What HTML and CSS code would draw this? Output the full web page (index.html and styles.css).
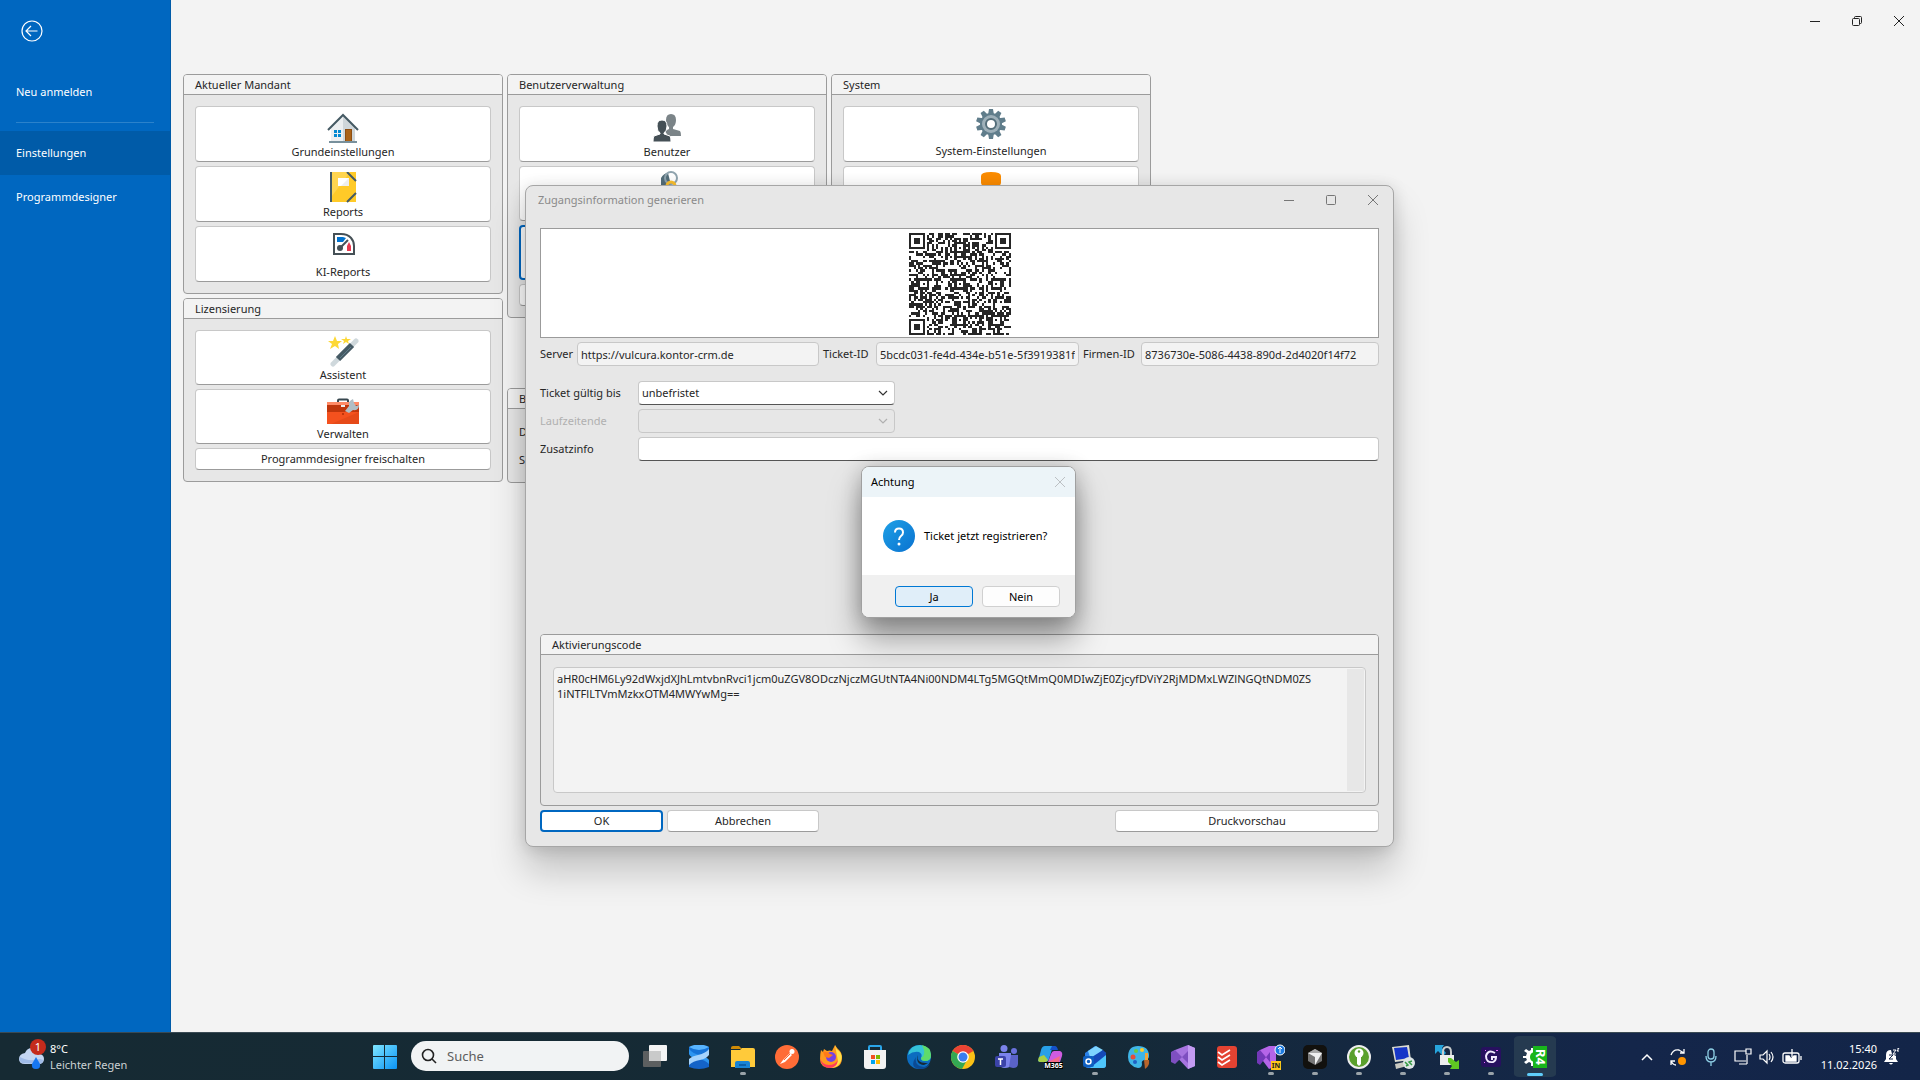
FILE: index.html
```
<!DOCTYPE html>
<html lang="de">
<head>
<meta charset="utf-8">
<title>Einstellungen</title>
<meta name="viewport" content="width=device-width, initial-scale=1">
<link rel="stylesheet" href="styles.css">
<script src="qr.js" defer></script>
</head>
<body>
<div class="app">
  <nav class="sidebar">
    <button class="back" type="button" aria-label="Zurück">
      <svg width="22" height="22" viewBox="0 0 22 22" fill="none" stroke="#fff" stroke-width="1.2"><circle cx="11" cy="11" r="10"/><path d="M16.500 11H5.500M10 6l-5 5 5 5"/></svg>
    </button>
    <a class="nav-item" href="#neu">Neu anmelden</a>
    <hr class="nav-line">
    <a class="nav-item active" href="#einstellungen">Einstellungen</a>
    <a class="nav-item" href="#designer">Programmdesigner</a>
  </nav>

  <main class="backstage">
    <div class="window-controls">
      <button type="button" aria-label="Minimieren"><svg width="12" height="12" viewBox="0 0 12 12" fill="none" stroke="#222"><path d="M1 6.500h10"/></svg></button>
      <button type="button" aria-label="Wiederherstellen"><svg width="12" height="12" viewBox="0 0 12 12" fill="none" stroke="#222"><rect x="1.500" y="3.500" width="7" height="7" rx="1"/><path d="M3.500 3.500v-1q0-1 1-1h5q1 0 1 1v5q0 1-1 1h-1"/></svg></button>
      <button type="button" aria-label="Schließen"><svg width="12" height="12" viewBox="0 0 12 12" fill="none" stroke="#222"><path d="M1 1l10 10M11 1L1 11"/></svg></button>
    </div>
    <div class="columns">
      <div class="column">
        <section class="group">
          <h2>Aktueller Mandant</h2>
          <div class="group-body">
            <button class="tile" type="button">
              <svg width="32" height="32" viewBox="0 0 32 32"><path d="M4 29V15L16 4l12 11v14z" fill="#eceff1"/><path d="M16 4l12 11v14H16z" fill="#cfd6da"/><path d="M1 18L16 3l15 15" fill="none" stroke="#455a64" stroke-width="2"/><path d="M7 18h3v3H7zM11 18h3v3h-3zM7 22h3v3H7zM11 22h3v3h-3z" fill="#0288d1"/><path d="M18 17h7v12h-7z" fill="#8d4e12"/><path d="M19 18h5v11h-5z" fill="#ab6216"/><path d="M2 29h28v2H2z" fill="#78909c"/></svg>
              <span>Grundeinstellungen</span>
            </button>
            <button class="tile" type="button">
              <svg width="32" height="32" viewBox="0 0 32 32"><rect x="3" y="0" width="26" height="30" rx="1" fill="#ffca28"/><path d="M5 0h18L5 24z" fill="#ffd54f"/><path d="M3 0h2v30H3z" fill="#455a64"/><path d="M20 0l9 9M20 30l9-9" stroke="#455a64" stroke-width="2"/><path d="M24 0h5v5zM24 30h5v-5z" fill="#ffca28"/><path d="M11 6h11v8H11z" fill="#fff"/><path d="M22 6v8H14z" fill="#eee"/></svg>
              <span>Reports</span>
            </button>
            <button class="tile" type="button">
              <svg width="32" height="32" viewBox="0 0 32 32"><path d="M7 2h7c9 0 13 6 13 12v8H7z" fill="#fff" stroke="#455056" stroke-width="2"/><path d="M10 5h6l3 1-3 4h-6z" fill="#0072ce"/><path d="M20 14l2-4 2 4v5h-4z" fill="#e8384f"/><circle cx="13" cy="16" r="3" fill="#455056"/><path d="M13 16l8-8" stroke="#455056" stroke-width="2"/></svg>
              <span>KI-Reports</span>
            </button>
          </div>
        </section>
        <section class="group">
          <h2>Lizensierung</h2>
          <div class="group-body">
            <button class="tile low" type="button">
              <svg width="32" height="32" viewBox="0 0 32 32"><path d="M6 29L29 6" stroke="#cfd8dc" stroke-width="5" stroke-linecap="round"/><path d="M11 24L25 10" stroke="#455a64" stroke-width="6"/><path d="M13 23L24 12" stroke="#607d8b" stroke-width="1"/><path d="M8 1l2 5h5l-4 3 1 5-4-3-5 3 2-5-4-3h5zM19 1l1 3h4l-3 2 1 3-3-2-3 2 1-3-3-2h4z" fill="#fdd835"/></svg>
              <span>Assistent</span>
            </button>
            <button class="tile low" type="button">
              <svg width="32" height="32" viewBox="0 -3 32 32"><path d="M11 6V3.500q0-1 1-1h8q1 0 1 1V6" fill="none" stroke="#37474f" stroke-width="2"/><path d="M0 5h32v22H0z" fill="#f4511e"/><path d="M0 5h32v3H0z" fill="#ff8a65"/><path d="M0 8h32v7H0z" fill="#bf360c"/><path d="M32 15v12H4z" fill="#e64a19"/><path d="M14 8h4v2h-4z" fill="#eceff1"/><path d="M15 16h2v2h-2z" fill="#bf360c"/><path d="M18 14l4-5q-1-5 4-7l1 4 2 3 3-1q0 6-6 5l-4 3z" fill="#b0bec5"/></svg>
              <span>Verwalten</span>
            </button>
            <button class="btn" type="button">Programmdesigner freischalten</button>
          </div>
        </section>
      </div>
      <div class="column">
        <section class="group">
          <h2>Benutzerverwaltung</h2>
          <div class="group-body">
            <button class="tile" type="button">
              <svg width="32" height="32" viewBox="0 0 32 32"><path d="M20 2q5 0 5 6 0 5-3 7v2l7 2q1 1 1 5H17l-3-5 4-2v-2q-3-2-3-7 0-6 5-6z" fill="#7b8488"/><path d="M11 8q5 0 5 6 0 5-3 7v1l6 2q1 1 1 6H2q0-5 1-6l6-2v-1q-3-2-3-7 0-6 5-6z" fill="#455056" stroke="#fff"/></svg>
              <span>Benutzer</span>
            </button>
            <button class="tile low" type="button" aria-label="Rechte">
              <svg width="32" height="32" viewBox="0 2 32 32"><path d="M10 9q3-5 7-5l3 12-4 8-6-6z" fill="#546e7a"/><circle cx="20" cy="9" r="6" fill="none" stroke="#90a4ae" stroke-width="2"/><circle cx="20" cy="17" r="4" fill="none" stroke="#fbc02d" stroke-width="3"/></svg>
              <span></span>
            </button>
            <button class="tile low focused" type="button" aria-label="Zugangsinformation"></button>
            <button class="btn" type="button" aria-label="Weitere"></button>
          </div>
        </section>
        <section class="group info">
          <h2>B</h2>
          <div class="group-body"><p>D</p><p>S</p></div>
        </section>
      </div>
      <div class="column">
        <section class="group">
          <h2>System</h2>
          <div class="group-body">
            <button class="tile gear" type="button">
              <svg width="32" height="32" viewBox="0 0 32 32"><g fill="#607d8b"><circle cx="16" cy="16" r="11"/><path d="M14 1h4l1 6h-6zM14 31h4l1-6h-6z"/><path d="M14 1h4l1 6h-6zM14 31h4l1-6h-6z" transform="rotate(36 16 16)"/><path d="M14 1h4l1 6h-6zM14 31h4l1-6h-6z" transform="rotate(72 16 16)"/><path d="M14 1h4l1 6h-6zM14 31h4l1-6h-6z" transform="rotate(108 16 16)"/><path d="M14 1h4l1 6h-6zM14 31h4l1-6h-6z" transform="rotate(144 16 16)"/></g><circle cx="16" cy="16" r="9" fill="#9eb0b9"/><circle cx="16" cy="16" r="5" fill="#fff" stroke="#546e7a" stroke-width="2"/></svg>
              <span>System-Einstellungen</span>
            </button>
            <button class="tile" type="button" aria-label="Datenbank">
              <svg width="32" height="32" viewBox="0 4 32 32"><path d="M6 8q0-4 10-4t10 4v7q0 4-10 4T6 15z" fill="#fb8c00"/><path d="M6 19q10 4 20 0v8q0 4-10 4T6 27z" fill="#fb8c00"/></svg>
              <span></span>
            </button>
          </div>
        </section>
      </div>
    </div>
  </main>

  <section class="dialog" role="dialog" aria-labelledby="dlg-title">
    <header class="dialog-title">
      <h1 id="dlg-title">Zugangsinformation generieren</h1>
      <div class="dialog-controls">
        <button type="button" aria-label="Minimieren"><svg width="12" height="12" viewBox="0 0 12 12" fill="none" stroke="#777"><path d="M1 6.500h10"/></svg></button>
        <button type="button" aria-label="Maximieren"><svg width="12" height="12" viewBox="0 0 12 12" fill="none" stroke="#777"><rect x="1.500" y="1.500" width="9" height="9" rx="1"/></svg></button>
        <button type="button" aria-label="Schließen"><svg width="12" height="12" viewBox="0 0 12 12" fill="none" stroke="#777"><path d="M1 1l10 10M11 1L1 11"/></svg></button>
      </div>
    </header>
    <form class="dialog-body" onsubmit="return false">
      <div class="qr-panel"><svg id="qr" class="qr" viewBox="0 0 45 45" role="img" aria-label="QR-Code"></svg></div>
      <div class="id-row">
        <label for="server">Server</label><input id="server" class="field readonly" readonly value="https://vulcura.kontor-crm.de">
        <label for="ticket">Ticket-ID</label><input id="ticket" class="field readonly" readonly value="5bcdc031-fe4d-434e-b51e-5f3919381f02">
        <label for="firma">Firmen-ID</label><input id="firma" class="field readonly" readonly value="8736730e-5086-4438-890d-2d4020f14f72">
      </div>
      <div class="form-grid">
        <label for="gueltig">Ticket gültig bis</label>
        <div class="combo"><select id="gueltig" class="field"><option>unbefristet</option></select><svg width="10" height="6" viewBox="0 0 10 6" fill="none" stroke="#333" stroke-width="1.200"><path d="M1 1l4 4 4-4"/></svg></div>
        <label for="laufzeit" class="off">Laufzeitende</label>
        <div class="combo"><select id="laufzeit" class="field" disabled><option></option></select><svg width="10" height="6" viewBox="0 0 10 6" fill="none" stroke="#b0b0b0" stroke-width="1.200"><path d="M1 1l4 4 4-4"/></svg></div>
        <label for="zusatz">Zusatzinfo</label>
        <input id="zusatz" class="field" type="text">
      </div>
      <section class="group code">
        <h2><label for="code">Aktivierungscode</label></h2>
        <div class="group-body">
          <div class="code-box">
            <textarea id="code" readonly>aHR0cHM6Ly92dWxjdXJhLmtvbnRvci1jcm0uZGV8ODczNjczMGUtNTA4Ni00NDM4LTg5MGQtMmQ0MDIwZjE0ZjcyfDViY2RjMDMxLWZlNGQtNDM0ZS
1iNTFlLTVmMzkxOTM4MWYwMg==</textarea>
            <div class="track"></div>
          </div>
        </div>
      </section>
      <footer class="actions">
        <button class="btn ok" type="submit">OK</button>
        <button class="btn cancel" type="button">Abbrechen</button>
        <button class="btn preview" type="button">Druckvorschau</button>
      </footer>
    </form>
  </section>

  <section class="confirm" role="alertdialog" aria-labelledby="cf-title">
    <header><h1 id="cf-title">Achtung</h1>
      <button type="button" aria-label="Schließen"><svg width="12" height="12" viewBox="0 0 12 12" fill="none" stroke="#bcc0c3"><path d="M1 1l10 10M11 1L1 11"/></svg></button>
    </header>
    <div class="message">
      <svg width="32" height="32" viewBox="0 0 32 32"><defs><linearGradient id="q" x1="0" y1="0" x2="1" y2="1"><stop offset="0" stop-color="#1ea0e6"/><stop offset="1" stop-color="#0a72d0"/></linearGradient></defs><circle cx="16" cy="16" r="16" fill="url(#q)"/><path d="M12 12.500q0-4 4-4t4 4q0 2-2 3.500t-2 4" fill="none" stroke="#fff" stroke-width="2"/><circle cx="16" cy="24" r="1.500" fill="#fff"/></svg>
      <p>Ticket jetzt registrieren?</p>
    </div>
    <footer><button class="choice primary" type="button">Ja</button><button class="choice" type="button">Nein</button></footer>
  </section>
</div>

<footer class="taskbar">
  <a class="weather" href="#wetter">
    <svg width="28" height="32" viewBox="0 0 28 32"><path d="M7 25q-6 0-6-5t6-6q2-5 7-5 6 0 8 6 4 1 4 5t-4 5z" fill="#c4d6f3"/><path d="M4 24q-4-3-2-6 8 5 20 2l3 1q0 4-4 4z" fill="#9fbbe8"/><path d="M18 18l4 7q1 5-4 5t-4-5z" fill="#1677f2"/><circle cx="20" cy="8" r="8" fill="#c42b1c"/><text x="20" y="12" font-size="11" text-anchor="middle" fill="#fff">1</text></svg>
    <span class="weather-text"><b>8°C</b><span>Leichter Regen</span></span>
  </a>
  <div class="apps">
    <button class="app-btn" type="button" aria-label="Start"><svg width="24" height="24" viewBox="0 0 24 24"><defs><linearGradient id="w" x1="0" y1="0" x2="1" y2="1"><stop offset="0" stop-color="#7fe6ff"/><stop offset="1" stop-color="#0a93f5"/></linearGradient></defs><path d="M1 0h10v11H0V1q0-1 1-1zM12 0h11q1 0 1 1v10H12zM0 12h11v12H1q-1 0-1-1zM12 12h12v11q0 1-1 1H12z" fill="url(#w)"/></svg></button>
    <label class="search"><svg width="16" height="16" viewBox="0 0 16 16" fill="none" stroke="#222" stroke-width="1.600"><circle cx="7" cy="7" r="5.500"/><path d="M11 11l4 4"/></svg><input type="search" placeholder="Suche" aria-label="Suche"></label>
    <button class="app-btn" type="button" aria-label="Taskansicht"><svg width="24" height="24" viewBox="0 0 24 24"><rect x="0" y="6" width="18" height="16" rx="1" fill="#5c5f60"/><rect x="6" y="0" width="18" height="16" rx="1" fill="#f4f4f4"/><path d="M6 6h12v10H6z" fill="#c9caca"/></svg></button>
    <button class="app-btn" type="button" aria-label="Datenbankstudio"><svg width="24" height="24" viewBox="0 0 24 24"><path d="M2 2q10-4 20 0v7q-10 6-20 0z" fill="#1673d8"/><path d="M2 2q10 6 20 0-10-5-20 0z" fill="#58b4ff"/><path d="M2 15q10-6 20 0v7q-10 4-20 0z" fill="#1463c8"/><path d="M2 4q4 5 11 6 6 1 9 5v4q-4-4-10-5Q3 13 2 9z" fill="#2e95f0"/><path d="M22 4v6q-3 4-9 5-7 1-11 5v-6q3-3 9-4 8-2 11-6z" fill="#a5d3fd"/></svg></button>
    <button class="app-btn running" type="button" aria-label="Explorer"><svg width="24" height="24" viewBox="0 0 24 24"><path d="M0 3q0-2 2-2h6l3 3H0z" fill="#d08a06"/><path d="M0 5h9l2-2h11q2 0 2 2v17H0z" fill="#ffca3a"/><path d="M4 23v-5q0-2 2-2h11q2 0 2 2v5z" fill="#1983d3"/><path d="M8 19h7v2H8z" fill="#0c5fa8"/></svg></button>
    <button class="app-btn" type="button" aria-label="Postman"><svg width="24" height="24" viewBox="0 0 24 24"><circle cx="12" cy="12" r="12" fill="#ff6c37"/><path d="M5 19l3-4 7-7 2 2-7 7z" fill="#fff"/><circle cx="17" cy="6.500" r="2.500" fill="#fff"/><path d="M9 15l6-6" stroke="#ff6c37"/></svg></button>
    <button class="app-btn" type="button" aria-label="Firefox"><svg width="24" height="24" viewBox="0 0 24 24"><path d="M2 5l2 2 1-3 3 2q3-1 5 0l3-6q2 3 3 4 4 3 4 9 0 10-11 10T1 14q0-5 1-9z" fill="#ff9a1f"/><path d="M16 0q1 4 4 6 4 4 2 10-3 7-10 7 9-4 6-12z" fill="#ffe14a"/><path d="M1 13q2 7 9 7 6 0 9-5-1 8-9 8-8-1-9-10z" fill="#ff3b5c"/><circle cx="12" cy="12" r="5" fill="#7542e5"/><path d="M4 7q4-1 7 2l3 1-4 3-4-1z" fill="#ff7a18"/></svg></button>
    <button class="app-btn" type="button" aria-label="Store"><svg width="24" height="24" viewBox="0 0 24 24"><path d="M6 6V2q0-1 1-1h10q1 0 1 1v4" fill="none" stroke="#2aa5e8" stroke-width="2"/><path d="M1 5h22v16q0 3-3 3H4q-3 0-3-3z" fill="#f3f3f3"/><path d="M8 10h4v4H8z" fill="#f25022"/><path d="M13 10h4v4h-4z" fill="#7fba00"/><path d="M8 15h4v4H8z" fill="#00a4ef"/><path d="M13 15h4v4h-4z" fill="#ffb900"/></svg></button>
    <button class="app-btn" type="button" aria-label="Edge"><svg width="24" height="24" viewBox="0 0 24 24"><circle cx="12" cy="12" r="12" fill="#0c6cc0"/><path d="M1 10Q3 0 13 0q10 1 11 10 0 6-6 6-4 0-4-3 2-4-2-6-6-1-11 3z" fill="#35c2d8"/><path d="M15 0q9 2 9 10 0 6-6 6-4 0-4-3 6-3 1-13z" fill="#5edb6a"/><path d="M9 12q-2 9 8 10 3 0 6-3-4 6-11 5Q2 22 9 12z" fill="#0b4a94"/><path d="M11 10q-2 9 10 8l-4 2q-9-1-6-10z" fill="#172a34"/></svg></button>
    <button class="app-btn" type="button" aria-label="Chrome"><svg width="24" height="24" viewBox="0 0 24 24"><circle cx="12" cy="12" r="12" fill="#fbc116"/><path d="M12 12L1.600 6A12 12 0 0 1 22.400 6z" fill="#ea4335"/><path d="M12 12L1.600 6A12 12 0 0 0 11 24l5-9z" fill="#34a853"/><circle cx="12" cy="12" r="5.800" fill="#fff"/><circle cx="12" cy="12" r="4.500" fill="#3b7ded"/></svg></button>
    <button class="app-btn" type="button" aria-label="Teams"><svg width="24" height="24" viewBox="0 0 24 24"><circle cx="9" cy="3.500" r="3.500" fill="#7b83eb"/><circle cx="19" cy="6" r="3" fill="#6a72dd"/><path d="M4 8h12v12q-1 3-6 3t-6-4z" fill="#7b83eb"/><path d="M16 10h7v9q0 4-5 4l-4-1z" fill="#5a62c8"/><rect y="11" width="11" height="11" rx="2" fill="#3b43a8"/><path d="M3 14h5M5.500 14v6" stroke="#fff" stroke-width="1.500"/></svg></button>
    <button class="app-btn" type="button" aria-label="Microsoft 365"><svg width="26" height="24" viewBox="0 0 26 24"><path d="M7 1h8l-4 13q-1 3-4 3H2q-3 0-1-4l2-8q1-4 4-4z" fill="#28a0e8"/><path d="M1 12l5-2 4 5q-1 2-3 2H2q-3 0-1-5z" fill="#a8cf45"/><path d="M14 1h3q2 0 3 4H12z" fill="#1450c8"/><path d="M16 6h6q3 1 2 5l-2 6H10l3-8q1-3 3-3z" fill="#cf5ce0"/><path d="M22 11l-1 6H10z" fill="#f56a88"/><path d="M6 17h19v7H6z" fill="#000"/><text x="15.500" y="23" font-size="7" font-weight="700" text-anchor="middle" fill="#fff">M365</text></svg></button>
    <button class="app-btn running" type="button" aria-label="Outlook"><svg width="24" height="24" viewBox="0 0 24 24"><path d="M2 8L12 1l11 7v12q0 3-3 3H5q-3 0-3-3z" fill="#2a80e8"/><path d="M5 6l8-5 7 4L8 15z" fill="#7ed4ff"/><path d="M9 12l11-7 3 3v4L8 22z" fill="#1549b8"/><path d="M23 10v10q0 3-3 3H7z" fill="#4ec5fb"/><rect y="11" width="11" height="11" rx="2" fill="#0f5fc0"/><circle cx="5.500" cy="16.500" r="2.500" fill="none" stroke="#fff" stroke-width="1.500"/></svg></button>
    <button class="app-btn" type="button" aria-label="Paint"><svg width="24" height="24" viewBox="0 0 24 24"><path d="M11 1q11 0 11 10 0 4-5 4-3 1-2 4 0 4-4 4Q1 21 1 12 1 1 11 1z" fill="#3fb5e6"/><circle cx="6" cy="12" r="2.500" fill="#e74c3c"/><circle cx="9" cy="6" r="2" fill="#6ccb3f"/><circle cx="15" cy="5" r="2" fill="#ffc928"/><circle cx="8" cy="17" r="2" fill="#2160c4"/><path d="M18 8h3v8h-3z" fill="#f2a63a"/><path d="M17 15h5q1 6-4 9z" fill="#b8642b"/></svg></button>
    <button class="app-btn" type="button" aria-label="Visual Studio"><svg width="24" height="24" viewBox="0 0 24 24"><path d="M17 0l7 3v18l-7 3L1 7l3-2z" fill="#a774e0"/><path d="M0 7l4-2 13 13V6L4 19l-4-2z" fill="#7e4fc0"/><path d="M17 0l7 3v18l-7 3z" fill="#c39bf2"/></svg></button>
    <button class="app-btn" type="button" aria-label="Todoist"><svg width="24" height="24" viewBox="0 0 24 24"><rect x="2" y="1" width="20" height="22" rx="3" fill="#e44332"/><path d="M3 7l4 3 8-5M3 12l4 3 8-5M3 17l4 3 8-5" fill="none" stroke="#fff" stroke-width="1.600"/></svg></button>
    <button class="app-btn running" type="button" aria-label="Visual Studio Insiders"><svg width="28" height="26" viewBox="0 0 28 26"><path d="M12 2h7v20l-7 3L0 9l3-3z" fill="#b565e8"/><path d="M0 8l3-2 10 12V8L3 21l-3-2z" fill="#7338b8"/><circle cx="23" cy="6" r="5" fill="#1c7be0" stroke="#fff"/><path d="M23 9V3M21 5l2-2 2 2" stroke="#fff" fill="none"/><path d="M14 17h10v9H14z" fill="#ffc61a"/><text x="19" y="24" font-size="7" font-weight="700" text-anchor="middle" fill="#222">IN</text></svg></button>
    <button class="app-btn running" type="button" aria-label="Cursor"><svg width="24" height="24" viewBox="0 0 24 24"><rect width="24" height="24" rx="5" fill="#12110e"/><path d="M12 4l7 4v8l-7 4-7-4V8z" fill="#777"/><path d="M5 8h14l-7 12v-8z" fill="#f0f0f0"/><path d="M12 4l7 4H5z" fill="#aaa"/></svg></button>
    <button class="app-btn running" type="button" aria-label="KeePass"><svg width="24" height="24" viewBox="0 0 24 24"><circle cx="12" cy="12" r="11" fill="#5aa02c" stroke="#eee" stroke-width="2"/><circle cx="12" cy="8" r="4.500" fill="#fff"/><circle cx="12" cy="6.500" r="1.200" fill="#5aa02c"/><path d="M10 11h4v8l-2 2-2-2z" fill="#fff"/></svg></button>
    <button class="app-btn running" type="button" aria-label="Remotedesktop"><svg width="24" height="24" viewBox="0 0 24 24"><path d="M1 2l17-2 2 15-16 2z" fill="#dcdcd2"/><path d="M3 3l13-1 2 11-13 2z" fill="#1636c8"/><path d="M4 19l9-2 3 4-11 3z" fill="#c9c9c0"/><circle cx="18" cy="18" r="6" fill="#dfe6e6"/><path d="M14 17l3 3-2 1M21 16l-3 1 3 3" stroke="#369b45" stroke-width="1.500" fill="none"/></svg></button>
    <button class="app-btn running" type="button" aria-label="WinSCP"><svg width="24" height="24" viewBox="0 0 24 24"><path d="M0 0h9L7 3l4 5-3 3-5-5-3 3z" fill="#27a4dc"/><path d="M8 10V7q0-5 4-5t4 5v3" fill="none" stroke="#c8cccc" stroke-width="2"/><path d="M5 10h14v10H5z" fill="#eceeee"/><path d="M13 13h3l5 4 3-2v9h-9l2-3-4-4z" fill="#60c722"/></svg></button>
    <button class="app-btn running" type="button" aria-label="GitKraken"><svg width="24" height="24" viewBox="0 0 24 24"><rect x="2" y="2" width="20" height="20" rx="3" fill="#27105f"/><path d="M16 8q-7-4-9 3 0 7 7 6 3-1 3-5h-4v3" fill="none" stroke="#f2eaff" stroke-width="2"/><path d="M6 5h1v1H6zM17 5h2v1h-2zM5 17h1v1H5z" fill="#e36bff"/></svg></button>
    <button class="app-btn current" type="button" aria-label="Kontor R4"><svg class="spill" width="24" height="24" viewBox="0 0 24 24"><path d="M10 1h14v22H10z" fill="#18b51b"/><path d="M0 11h3l1-3-3-2 2-2 3 2 2-1V3h2v18H8v-3l-2-1-3 2-2-2 3-2-1-2H0z" fill="#fff"/><path d="M11 7v10q-4-1-4-5t4-5z" fill="#18b51b"/><text x="12" y="-13" font-size="13" font-weight="700" text-anchor="middle" fill="#fff" transform="rotate(90)">R4</text></svg></button>
  </div>
  <div class="tray">
    <svg width="12" height="12" viewBox="0 0 12 12" fill="none" stroke="#fff" stroke-width="1.500"><path d="M1 9l5-5 5 5"/></svg>
    <svg width="20" height="20" viewBox="0 0 20 20" fill="none" stroke="#fff" stroke-width="1.300"><path d="M3 8q2-6 8-5l5 3M16 2v4h-4M3 18v-4h4M3 14q2 4 5 4"/><circle cx="14" cy="14" r="4" fill="#ff9500" stroke="none"/></svg>
    <svg width="16" height="20" viewBox="0 0 16 20" fill="none" stroke="#8fd0e6" stroke-width="1.300"><rect x="5" y="2" width="6" height="10" rx="3"/><path d="M3 9q0 6 5 6t5-6M8 15v4"/></svg>
    <span class="status">
      <svg width="18" height="18" viewBox="0 0 18 18" fill="none" stroke="#fff" stroke-width="1.200"><path d="M12 3H1v10h11M5 16h8M13 7v9M12 1h5v5h-5z"/></svg>
      <svg width="16" height="16" viewBox="0 0 16 16" fill="none" stroke="#fff" stroke-width="1.200"><path d="M1 6h3l4-4v12l-4-4H1zM10 5q2 3 0 6M12 3q4 5 0 10"/></svg>
      <svg width="20" height="16" viewBox="0 0 20 16" fill="none" stroke="#fff" stroke-width="1.300"><rect x="1" y="4" width="16" height="10" rx="2"/><path d="M19 7v4"/><path d="M4 7h3l2 3 3-3h2v5H4z" fill="#fff"/><path d="M10 0v8"/></svg>
    </span>
    <time class="clock"><span>15:40</span><span>11.02.2026</span></time>
    <svg width="16" height="18" viewBox="0 0 16 18"><path d="M7 2q-5 0-5 5v4l-2 3h14l-2-3V8L8 6zM5 15h4q-2 3-4 0z" fill="#fff"/><path d="M5 7h4l-4 4h4" fill="none" stroke="#14264a"/><path d="M9 2h3L9 6h3M13 0h2l-2 3h2" fill="none" stroke="#fff"/></svg>
  </div>
</footer>
</body>
</html>
```
FILE: styles.css
```
* { box-sizing: border-box; }
body {
  margin: 0;
  min-height: 100vh;
  display: grid;
  grid-template-rows: 1fr 48px;
  font: 11px/16px "Noto Sans", "Open Sans", sans-serif;
  color: #262626;
  background: #f3f3f3;
}
button, input, select, textarea { font: inherit; color: inherit; margin: 0; }
button { padding: 0; border: 0; background: none; }
h1, h2, p { margin: 0; font-size: 11px; font-weight: 400; line-height: 16px; }
svg { display: block; flex: none; }

.app { position: relative; display: grid; grid-template-columns: 171px 1fr; }

/* Sidebar */
.sidebar { background: #0067c0; border-right: 1px solid #005ba8; color: #fff; }
.back { display: block; margin: 20px 0 28px 21px; }
.nav-item { display: flex; align-items: center; height: 44px; padding-left: 16px; color: #fff; text-decoration: none; }
.nav-item.active { background: #005ba8; }
.nav-line { margin: 8px 16px; border: 0; border-top: 1px solid #2b82cb; }

/* Settings page */
.backstage { padding: 0 12px; }
.window-controls { display: flex; justify-content: flex-end; height: 42px; gap: 30px; padding-right: 3px; align-items: center; margin-bottom: 32px; }
.columns { display: grid; grid-template-columns: repeat(3, minmax(0, 320px)); gap: 4px; }
.column { display: flex; flex-direction: column; gap: 4px; }
.group { border: 1px solid #9b9b9b; border-radius: 4px; background: #e7e7e7; overflow: hidden; }
.group h2 { height: 20px; padding: 2px 11px; border-bottom: 1px solid #9b9b9b; background: #f3f3f3; }
.group-body { display: flex; flex-direction: column; gap: 4px; padding: 11px; }
.tile, .btn { border: 1px solid #c8c8c8; border-bottom-color: #9b9b9b; border-radius: 4px; background: #fff; }
.tile { display: flex; flex-direction: column; align-items: center; height: 56px; padding: 5px 0; }
.tile.low { height: 55px; padding: 4px 0; }
.tile.gear { padding: 1px 0; gap: 3px; }
.btn { height: 22px; line-height: 18px; }
.focused, .btn.ok { border: 2px solid #0067c0; }
.info { margin-top: 66px; min-height: 95px; }
.info .group-body { padding-top: 15px; gap: 12px; }

/* Ticket window */
.dialog {
  position: absolute; left: 525px; top: 185px;
  display: flex; flex-direction: column;
  width: 869px; min-height: 662px;
  border: 1px solid #a6a6a6; border-radius: 8px; background: #e7e7e7;
  box-shadow: 0 24px 36px rgba(0, 0, 0, .2), 0 2px 16px rgba(0, 0, 0, .14);
}
.dialog-title { display: flex; justify-content: space-between; align-items: center; height: 28px; padding: 0 14px 0 12px; color: #8a8a8a; }
.dialog-controls { display: flex; gap: 30px; }
.dialog-body { flex: 1; display: flex; flex-direction: column; padding: 14px; }
.qr-panel { height: 110px; padding-top: 4px; border: 1px solid #9b9b9b; background: #fff; }
.qr { width: 102px; height: 102px; margin: 0 auto; }
.id-row { display: grid; grid-template-columns: 33px 242px 49px 203px 54px 1fr; column-gap: 4px; align-items: center; margin: 4px 0 15px; white-space: nowrap; }
.field { width: 100%; height: 24px; padding: 0 3px; border: 1px solid #c8c8c8; border-bottom-color: #555; border-radius: 4px; background: #fff; outline: 0; }
.field.readonly { background: #f3f3f3; border-color: #c8c8c8; }
.form-grid { display: grid; grid-template-columns: 98px 1fr; row-gap: 4px; align-items: center; }
.combo { display: grid; grid-template-columns: 257px; align-items: center; }
.combo > * { grid-area: 1 / 1; }
.combo svg { justify-self: end; margin-right: 7px; pointer-events: none; }
.combo select { appearance: none; opacity: 1; }
.combo select:disabled { background: #e7e7e7; border-color: #c8c8c8; }
.off { color: #b0b0b0; }
.code { margin: auto 0 4px; }
.code .group-body { padding: 12px; }
.code-box { display: flex; height: 126px; padding: 1px; border: 1px solid #c8c8c8; border-radius: 4px; background: #f3f3f3; }
.code-box textarea { flex: 1; min-width: 0; padding: 2px; border: 0; background: none; resize: none; overflow: hidden; white-space: pre; line-height: 15px; outline: 0; }
.track { width: 17px; background: #e7e7e7; }
.actions { display: flex; gap: 4px; }
.ok { width: 123px; }
.cancel { width: 152px; }
.preview { width: 264px; margin-left: auto; }

/* Confirmation */
.confirm {
  position: absolute; left: 861px; top: 466px;
  width: 215px; border: 1px solid #a0a0a0; border-radius: 8px; overflow: hidden;
  background: #fff; color: #000;
  box-shadow: 0 22px 32px rgba(0, 0, 0, .34), 0 2px 20px rgba(0, 0, 0, .22);
}
.confirm header { display: flex; justify-content: space-between; align-items: center; height: 30px; padding: 0 9px; background: #ecf4f8; }
.message { display: flex; align-items: center; gap: 9px; height: 78px; padding-left: 21px; white-space: nowrap; }
.confirm footer { display: flex; justify-content: flex-end; gap: 9px; padding: 11px 15px 10px; background: #f0f0f0; }
.choice { width: 78px; height: 21px; border: 1px solid #d0d0d0; border-radius: 4px; background: #fdfdfd; }
.choice.primary { border-color: #0078d4; background: #e0eef9; }

/* Taskbar */
.taskbar { display: grid; grid-template-columns: 1fr auto 1fr; align-items: stretch; border-top: 1px solid #3a4a54; background: linear-gradient(90deg, #162a33 0%, #152a36 55%, #14264a 85%, #132548 100%); color: #fff; }
.weather { display: flex; align-items: center; gap: 4px; padding-left: 18px; color: #fff; text-decoration: none; }
.weather svg { margin-bottom: 3px; }
.weather-text { display: flex; flex-direction: column; }
.weather-text b { font-weight: 400; }
.weather-text span { color: #ccd2d5; }
.apps { display: flex; align-items: stretch; }
.app-btn { display: grid; place-items: center; width: 44px; height: 47px; position: relative; }
.app-btn.running::after, .app-btn.current::after { content: ""; position: absolute; left: 19px; bottom: 5px; width: 6px; height: 3px; border-radius: 2px; background: #9aa3a9; }
.app-btn.current { border: 3px solid transparent; border-width: 3px 1px; border-radius: 6px; background: #253a50 padding-box; }
.app-btn.current::after { left: 13px; bottom: 1px; width: 16px; background: #5fcdfb; }
.spill { overflow: visible; }
.search { display: flex; align-items: center; gap: 10px; width: 218px; height: 30px; margin: 8px 4px; padding: 0 10px; border-radius: 15px; background: #f1f3f4; }
.search input { flex: 1; min-width: 0; padding: 0; border: 0; outline: 0; background: none; font-size: 13px; }
.search input::placeholder { color: #5d5d5d; opacity: 1; }
.tray { display: flex; justify-content: flex-end; align-items: center; gap: 15px; padding-right: 20px; }
.status { display: flex; align-items: center; gap: 7px; }
.clock { display: flex; flex-direction: column; align-items: flex-end; width: 60px; margin-right: -8px; white-space: nowrap; }
```
FILE: qr.js
```
// Draws the activation code as a version 7-L QR symbol (45 x 45 modules).
(function () {
  var N = 45, DATA = 156, BLOCK = 78, ECC = 20;
  var text = document.getElementById("code").value.replace(/\s/g, "");

  // Galois field tables
  var exp = [], log = [], v = 1, i, j;
  for (i = 0; i < 255; i++) { exp[i] = v; log[v] = i; v <<= 1; if (v > 255) v ^= 0x11d; }
  function mul(a, b) { return a && b ? exp[(log[a] + log[b]) % 255] : 0; }

  var gen = [1];
  for (i = 0; i < ECC; i++) {
    var next = gen.concat([0]);
    for (j = 0; j < gen.length; j++) next[j + 1] ^= mul(gen[j], exp[i]);
    gen = next;
  }
  function remainder(block) {
    var r = block.concat(new Array(ECC).fill(0));
    for (var a = 0; a < block.length; a++) {
      var f = r[a];
      for (var b = 0; b < gen.length; b++) r[a + b] ^= mul(gen[b], f);
    }
    return r.slice(block.length);
  }

  var bits = [];
  function put(value, n) { while (n--) bits.push((value >> n) & 1); }
  put(4, 4);
  put(text.length, 8);
  for (i = 0; i < text.length; i++) put(text.charCodeAt(i), 8);
  put(0, 4);
  while (bits.length % 8) bits.push(0);
  var data = [];
  for (i = 0; i < bits.length; i += 8) data.push(parseInt(bits.slice(i, i + 8).join(""), 2));
  for (i = 0; data.length < DATA; i++) data.push(i % 2 ? 0x11 : 0xec);
  var b1 = data.slice(0, BLOCK), b2 = data.slice(BLOCK), e1 = remainder(b1), e2 = remainder(b2), words = [];
  for (i = 0; i < BLOCK; i++) words.push(b1[i], b2[i]);
  for (i = 0; i < ECC; i++) words.push(e1[i], e2[i]);

  var masks = [
    function (r, c) { return (r + c) % 2 === 0; },
    function (r) { return r % 2 === 0; },
    function (r, c) { return c % 3 === 0; },
    function (r, c) { return (r + c) % 3 === 0; },
    function (r, c) { return ((r >> 1) + Math.floor(c / 3)) % 2 === 0; },
    function (r, c) { return (r * c) % 2 + (r * c) % 3 === 0; },
    function (r, c) { return ((r * c) % 2 + (r * c) % 3) % 2 === 0; },
    function (r, c) { return ((r + c) % 2 + (r * c) % 3) % 2 === 0; }
  ];

  function build(mask) {
    var m = [], used = [], r, c, k;
    for (r = 0; r < N; r++) { m.push(new Array(N).fill(0)); used.push(new Array(N).fill(false)); }
    function set(y, x, on) { if (y >= 0 && x >= 0 && y < N && x < N) { m[y][x] = on ? 1 : 0; used[y][x] = true; } }
    for (k = 0; k < N; k++) { set(6, k, k % 2 === 0); set(k, 6, k % 2 === 0); }
    [[3, 3], [3, N - 4], [N - 4, 3]].forEach(function (p) {
      for (var y = -4; y < 5; y++) for (var x = -4; x < 5; x++) {
        var d = Math.max(Math.abs(x), Math.abs(y));
        set(p[0] + y, p[1] + x, d !== 2 && d !== 4);
      }
    });
    [[6, 22], [22, 6], [22, 22], [22, 38], [38, 22], [38, 38]].forEach(function (p) {
      for (var y = -2; y < 3; y++) for (var x = -2; x < 3; x++) set(p[0] + y, p[1] + x, Math.max(Math.abs(x), Math.abs(y)) !== 1);
    });
    var f = 8 | mask, rem = f;
    for (k = 0; k < 10; k++) rem = (rem << 1) ^ ((rem >> 9) * 0x537);
    f = ((f << 10) | rem) ^ 0x5412;
    function fb(n) { return (f >> n) & 1; }
    for (k = 0; k < 6; k++) set(k, 8, fb(k));
    set(7, 8, fb(6)); set(8, 8, fb(7)); set(8, 7, fb(8));
    for (k = 9; k < 15; k++) set(8, 14 - k, fb(k));
    for (k = 0; k < 8; k++) set(8, N - 1 - k, fb(k));
    for (k = 8; k < 15; k++) set(N - 15 + k, 8, fb(k));
    set(N - 8, 8, 1);
    for (k = 0; k < 18; k++) {
      var on = (0x07c94 >> k) & 1, a = N - 11 + k % 3, b = Math.floor(k / 3);
      set(a, b, on); set(b, a, on);
    }
    var n = 0;
    for (var right = N - 1; right > 0; right -= 2) {
      if (right === 6) right = 5;
      for (var s = 0; s < N; s++) for (k = 0; k < 2; k++) {
        c = right - k;
        r = ((right + 1) & 2) === 0 ? N - 1 - s : s;
        if (used[r][c]) continue;
        var bit = n < words.length * 8 ? (words[n >> 3] >> (7 - (n & 7))) & 1 : 0;
        m[r][c] = bit ^ (masks[mask](r, c) ? 1 : 0);
        n++;
      }
    }
    return m;
  }

  function penalty(m) {
    var p = 0, dark = 0, r, c;
    var cols = m.map(function (_, x) { return m.map(function (row) { return row[x]; }); });
    m.concat(cols).forEach(function (row) {
      var s = row.join("");
      (s.match(/0{5,}|1{5,}/g) || []).forEach(function (run) { p += run.length - 2; });
      for (var x = 0; x + 11 <= N; x++) {
        var w = s.substr(x, 11);
        if (w === "10111010000" || w === "00001011101") p += 40;
      }
    });
    for (r = 0; r < N; r++) for (c = 0; c < N; c++) {
      dark += m[r][c];
      if (r && c && m[r][c] === m[r - 1][c] && m[r][c] === m[r][c - 1] && m[r][c] === m[r - 1][c - 1]) p += 3;
    }
    return p + Math.floor(Math.abs(dark * 20 / (N * N) - 10)) * 10;
  }

  var best = null, low = Infinity;
  for (i = 0; i < 8; i++) {
    var m = build(i), p = penalty(m);
    if (p < low) { low = p; best = m; }
  }
  var d = "";
  best.forEach(function (row, y) { row.forEach(function (on, x) { if (on) d += "M" + x + " " + y + "h1v1h-1z"; }); });
  var path = document.createElementNS("http://www.w3.org/2000/svg", "path");
  path.setAttribute("d", d);
  path.setAttribute("fill", "#262626");
  path.setAttribute("shape-rendering", "crispEdges");
  document.getElementById("qr").appendChild(path);
})();
```
